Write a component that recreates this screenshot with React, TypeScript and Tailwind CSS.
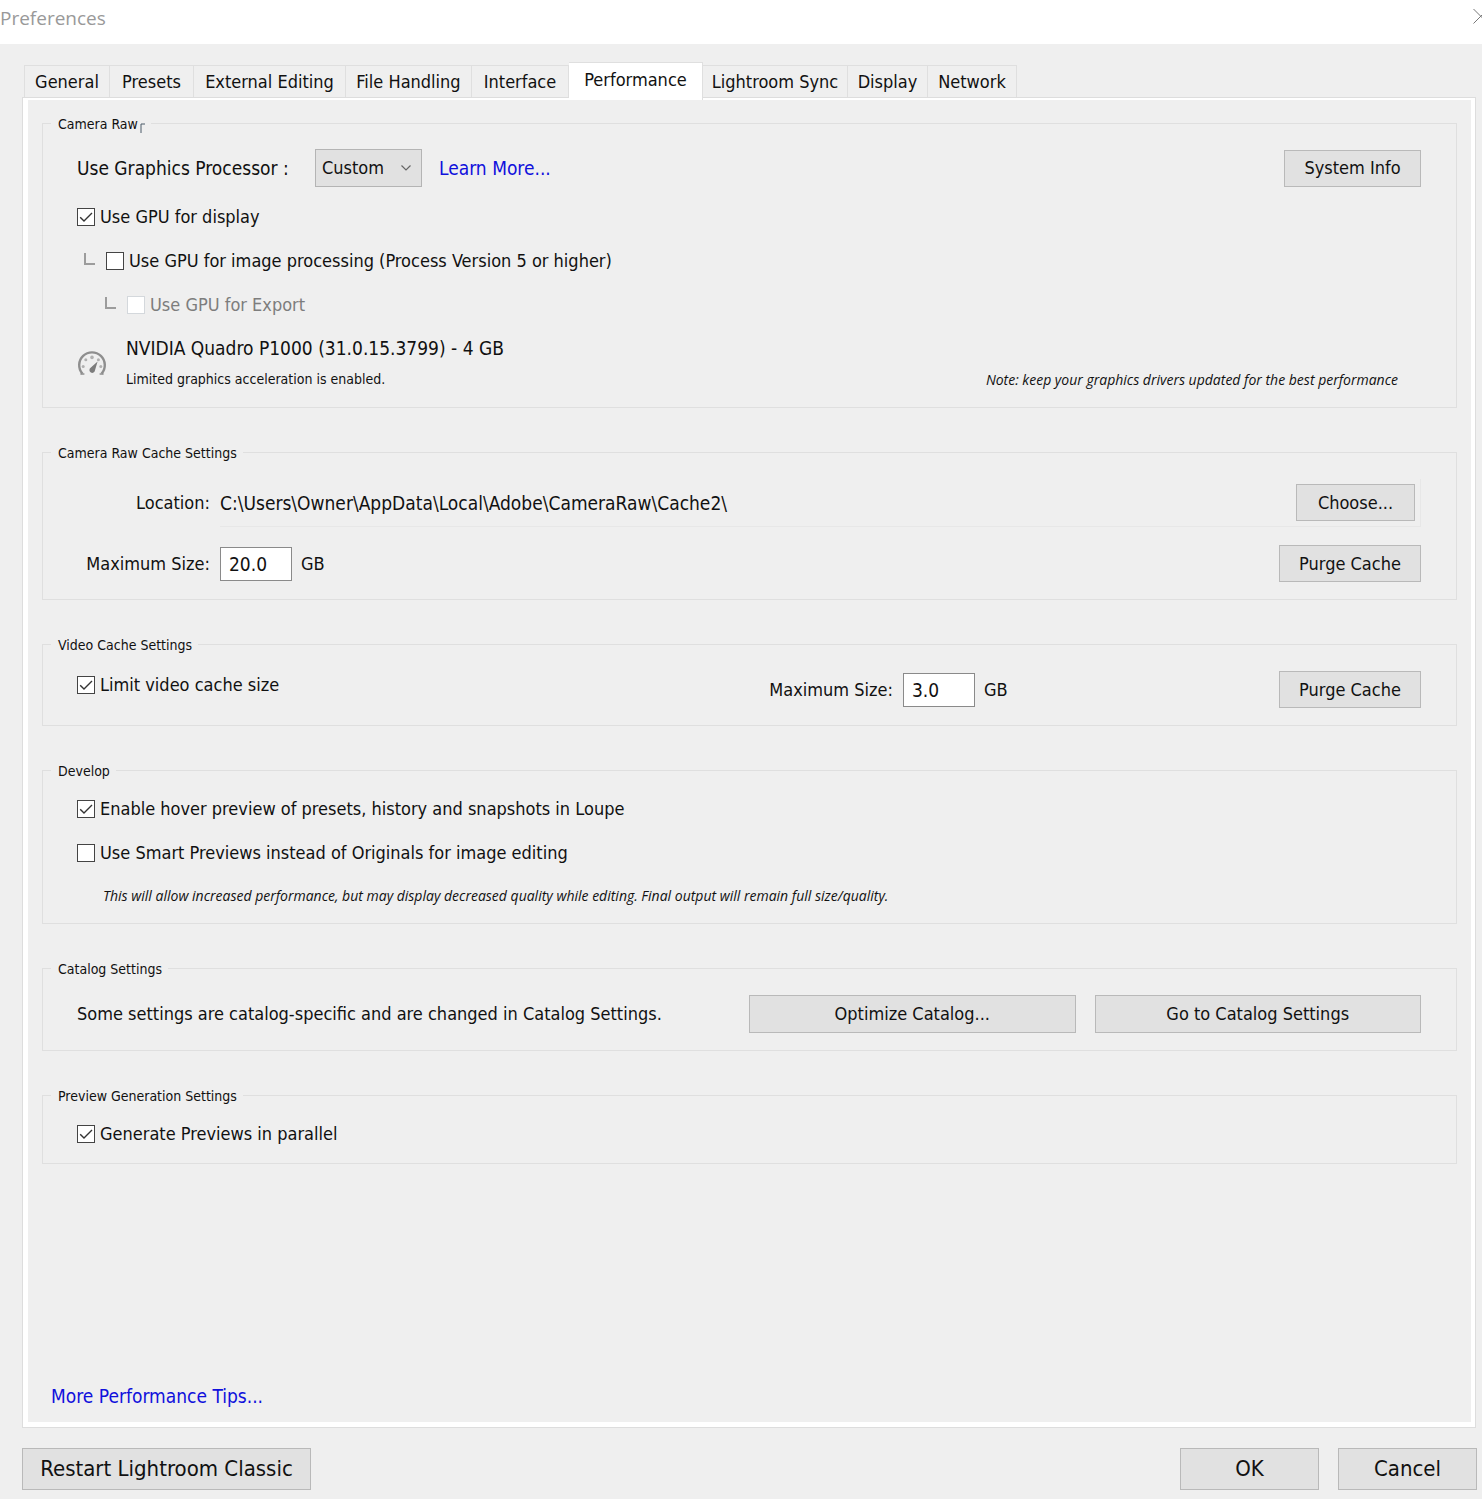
import React, { useId, useState } from 'react';

/* ============================================================
   Small controls
   ============================================================ */

interface PushButtonProps {
  children: React.ReactNode;
  className?: string;
}

function PushButton({ children, className = '' }: PushButtonProps) {
  return (
    <button
      type="button"
      className={`bg-[#e1e1e1] border border-[#b9b9b9] whitespace-nowrap hover:border-[#0078d7] ${className}`}
    >
      {children}
    </button>
  );
}

interface CheckOptionProps {
  label: string;
  defaultChecked?: boolean;
  disabled?: boolean;
  className?: string;
}

function CheckOption({ label, defaultChecked = false, disabled = false, className = 'h-11' }: CheckOptionProps) {
  const [checked, setChecked] = useState(defaultChecked);

  return (
    <label className={`flex items-center gap-[5px] ${disabled ? 'text-[#7d7d7d]' : ''} ${className}`}>
      <span className="relative size-[18px] shrink-0">
        <input
          type="checkbox"
          checked={checked}
          disabled={disabled}
          onChange={(e) => setChecked(e.target.checked)}
          className="block size-[18px] appearance-none border border-[#444444] bg-white disabled:border-[#d4d8dc]"
        />
        {checked && (
          <svg viewBox="0 0 18 18" className="pointer-events-none absolute inset-0 size-[18px]" fill="none">
            <path d="M3.2 9.2 7 13 15 5" stroke="#333333" strokeWidth="1.4" />
          </svg>
        )}
      </span>
      {label}
    </label>
  );
}

interface SizeFieldProps {
  label: string;
  value: string;
  labelClass?: string;
}

function SizeField({ label, value, labelClass = '' }: SizeFieldProps) {
  const id = useId();

  return (
    <div className="flex items-center">
      <label htmlFor={id} className={`text-right whitespace-nowrap ${labelClass}`}>
        {label}
      </label>
      <input
        id={id}
        type="text"
        defaultValue={value}
        className="ml-2.5 h-[34px] w-[72px] border border-[#8a8a8a] bg-white px-2 text-[19px] outline-none"
      />
      <span className="ml-[9px]">GB</span>
    </div>
  );
}

/* ============================================================
   Icons
   ============================================================ */

function BranchMark() {
  return (
    <svg viewBox="0 0 11 16" className="h-4 w-[11px] shrink-0" fill="none">
      <path d="M1 0V11H11" stroke="#9c9c9c" strokeWidth="2" />
    </svg>
  );
}

function GaugeIcon() {
  return (
    <svg viewBox="0 0 30 26" className="h-[26px] w-[30px]" fill="none">
      <path d="M5.4 22.6A12.8 12.8 0 1 1 24.6 22.6" stroke="#8e8e8e" strokeWidth="2.4" />
      <path d="M3.4 23h4M22.6 23h4" stroke="#8e8e8e" strokeWidth="1.6" />
      <g fill="#b0b0b0">
        <circle cx="6.2" cy="15.4" r="1.5" />
        <circle cx="8.8" cy="8.8" r="1.5" />
        <circle cx="15" cy="6.4" r="1.8" />
        <circle cx="21.4" cy="8.8" r="1.5" />
        <circle cx="23.8" cy="15.4" r="1.5" />
      </g>
      <path d="M20.6 10.6 18 19.2a2.8 2.8 0 1 1-4.4-2.4Z" fill="#7c7c7c" />
    </svg>
  );
}

/* ============================================================
   Group box
   ============================================================ */

interface GroupProps {
  title: React.ReactNode;
  children: React.ReactNode;
  className?: string;
}

function Group({ title, children, className = '' }: GroupProps) {
  return (
    <fieldset className="border border-[#dfdfdf]">
      <legend className="ml-2 flex h-[18px] items-center pt-0.5 pr-1.5 pl-[7px] text-sm">{title}</legend>
      <div className={`pr-[35px] pl-[34px] ${className}`}>{children}</div>
    </fieldset>
  );
}

/* ============================================================
   Tabs
   ============================================================ */

const tabs = [
  { name: 'General', width: 'w-[86px]' },
  { name: 'Presets', width: 'w-[84px]' },
  { name: 'External Editing', width: 'w-[152px]' },
  { name: 'File Handling', width: 'w-[126px]' },
  { name: 'Interface', width: 'w-[97px]' },
  { name: 'Performance', width: 'w-[134px]' },
  { name: 'Lightroom Sync', width: 'w-[145px]' },
  { name: 'Display', width: 'w-[80px]' },
  { name: 'Network', width: 'w-[89px]' },
];

function TabStrip() {
  const [active, setActive] = useState('Performance');

  return (
    <div role="tablist" className="flex h-[35px] items-end pl-0.5">
      {tabs.map((tab) => (
        <button
          key={tab.name}
          type="button"
          role="tab"
          aria-selected={tab.name === active}
          onClick={() => setActive(tab.name)}
          className={`
            shrink-0 whitespace-nowrap border-t border-r border-[#dfdfdf] text-center first:border-l
            ${tab.width}
            ${tab.name === active ? 'relative -mb-[3px] h-[38px] bg-white pb-1' : 'h-8'}
          `}
        >
          {tab.name}
        </button>
      ))}
    </div>
  );
}

/* ============================================================
   Preferences dialog
   ============================================================ */

export default function App() {
  return (
    <div className="flex min-h-screen flex-col overflow-x-hidden bg-[#efefef] font-['DejaVu_Sans_Condensed','DejaVu_Sans',sans-serif] text-lg leading-6 text-[#111111]">
      <header className="flex h-11 items-start justify-between bg-white">
        <h1 className="pt-1.5 font-['Open_Sans','Noto_Sans',sans-serif] text-[19px] leading-6 text-[#999999]">
          Preferences
        </h1>
        <button type="button" aria-label="Close" className="mt-2 h-4 w-[9px] overflow-hidden">
          <svg viewBox="0 0 16 16" className="size-4" fill="none">
            <path d="M0.5 1 15 15.5M0.5 15.5 15 1" stroke="#777777" />
          </svg>
        </button>
      </header>

      <main className="flex flex-1 flex-col pt-[18px] pr-1.5 pb-5 pl-[22px]">
        <TabStrip />
        <div className="flex flex-1 flex-col border border-[#dddddd] bg-white pt-0.5 pr-1 pb-[5px] pl-[5px]">
          <div className="flex flex-1 flex-col bg-[#efefef] px-3.5 pt-3.5 pb-3">
            <div className="flex flex-col gap-[35px]">
              <Group
                title={
                  <>
                    Camera Raw
                    <svg viewBox="0 0 5 10" className="mt-2 ml-0.5 h-2.5 w-[5px]" fill="none">
                      <path d="M1 10V1H5" stroke="#4a5a68" />
                    </svg>
                  </>
                }
                className="pt-[17px] pb-3"
              >
                <div className="flex items-center">
                  <label htmlFor="gpu-mode" className="w-[238px] text-[19px]">
                    Use Graphics Processor :
                  </label>
                  <div className="relative">
                    <select
                      id="gpu-mode"
                      defaultValue="Custom"
                      className="block h-[38px] w-[107px] appearance-none border border-[#b4b4b4] bg-[#e1e1e1] pl-1.5 outline-none"
                    >
                      <option>Auto</option>
                      <option>Custom</option>
                      <option>Off</option>
                    </select>
                    <svg
                      viewBox="0 0 10 6"
                      className="pointer-events-none absolute top-4 right-[11px] h-1.5 w-2.5"
                      fill="none"
                    >
                      <path d="M0.5 0.5 5 5 9.5 0.5" stroke="#666666" strokeWidth="1.2" />
                    </svg>
                  </div>
                  <a href="#learn-more" className="ml-[17px] text-[19px] text-[#1010dc]">
                    Learn More...
                  </a>
                  <PushButton className="ml-auto h-[37px] w-[137px]">System Info</PushButton>
                </div>

                <div className="mt-2">
                  <CheckOption label="Use GPU for display" defaultChecked />
                  <div className="flex items-center gap-[11px] pl-[7px]">
                    <BranchMark />
                    <CheckOption label="Use GPU for image processing (Process Version 5 or higher)" />
                  </div>
                  <div className="flex items-center gap-[11px] pl-7">
                    <BranchMark />
                    <CheckOption label="Use GPU for Export" disabled />
                  </div>
                </div>

                <div className="mt-1.5 flex items-center">
                  <GaugeIcon />
                  <div className="ml-[19px] flex-1">
                    <p className="text-[19px] leading-[31px]">NVIDIA Quadro P1000 (31.0.15.3799) - 4 GB</p>
                    <div className="flex justify-between pr-[23px]">
                      <p className="text-sm leading-[31px]">Limited graphics acceleration is enabled.</p>
                      <p className="font-['Open_Sans','Noto_Sans',sans-serif] text-sm leading-[31px] italic">
                        Note: keep your graphics drivers updated for the best performance
                      </p>
                    </div>
                  </div>
                </div>
              </Group>

              <Group title="Camera Raw Cache Settings" className="pt-[18px] pb-[17px]">
                <div className="flex items-center">
                  <span className="w-[133px] text-right">Location:</span>
                  <div className="ml-2.5 flex h-12 flex-1 items-center justify-between border-r border-b border-[#e7e7e7] pr-[5px]">
                    <span className="text-[19px]">C:\Users\Owner\AppData\Local\Adobe\CameraRaw\Cache2\</span>
                    <PushButton className="h-[37px] w-[119px]">Choose...</PushButton>
                  </div>
                </div>
                <div className="mt-[18px] flex items-center justify-between">
                  <SizeField label="Maximum Size:" value="20.0" labelClass="w-[133px]" />
                  <PushButton className="h-[37px] w-[142px]">Purge Cache</PushButton>
                </div>
              </Group>

              <Group title="Video Cache Settings" className="grid grid-cols-2 pt-[18px] pb-[17px]">
                <CheckOption label="Limit video cache size" defaultChecked className="h-7" />
                <div className="flex items-center justify-between">
                  <SizeField label="Maximum Size:" value="3.0" labelClass="w-[144px]" />
                  <PushButton className="h-[37px] w-[142px]">Purge Cache</PushButton>
                </div>
              </Group>

              <Group title="Develop" className="pt-2 pb-1.5">
                <CheckOption label="Enable hover preview of presets, history and snapshots in Loupe" defaultChecked />
                <CheckOption label="Use Smart Previews instead of Originals for image editing" />
                <p className="pl-[26px] font-['Open_Sans','Noto_Sans',sans-serif] text-sm leading-[42px] italic">
                  This will allow increased performance, but may display decreased quality while editing. Final output
                  will remain full size/quality.
                </p>
              </Group>

              <Group title="Catalog Settings" className="grid grid-cols-2 items-center pt-[18px] pb-[17px]">
                <p>Some settings are catalog-specific and are changed in Catalog Settings.</p>
                <div className="grid grid-cols-2 gap-[19px]">
                  <PushButton className="h-[38px]">Optimize Catalog...</PushButton>
                  <PushButton className="h-[38px]">Go to Catalog Settings</PushButton>
                </div>
              </Group>

              <Group title="Preview Generation Settings" className="pt-2 pb-[7px]">
                <CheckOption label="Generate Previews in parallel" defaultChecked />
              </Group>
            </div>

            <a href="#performance-tips" className="mt-auto self-start pl-[9px] text-[19px] leading-7 text-[#1010dc]">
              More Performance Tips...
            </a>
          </div>
        </div>
      </main>

      <footer className="flex items-center gap-[19px] pr-[5px] pb-[9px] pl-[22px] text-[22px]">
        <PushButton className="h-[42px] w-[289px]">Restart Lightroom Classic</PushButton>
        <PushButton className="ml-auto h-[42px] w-[139px]">OK</PushButton>
        <PushButton className="h-[42px] w-[139px]">Cancel</PushButton>
      </footer>
    </div>
  );
}
